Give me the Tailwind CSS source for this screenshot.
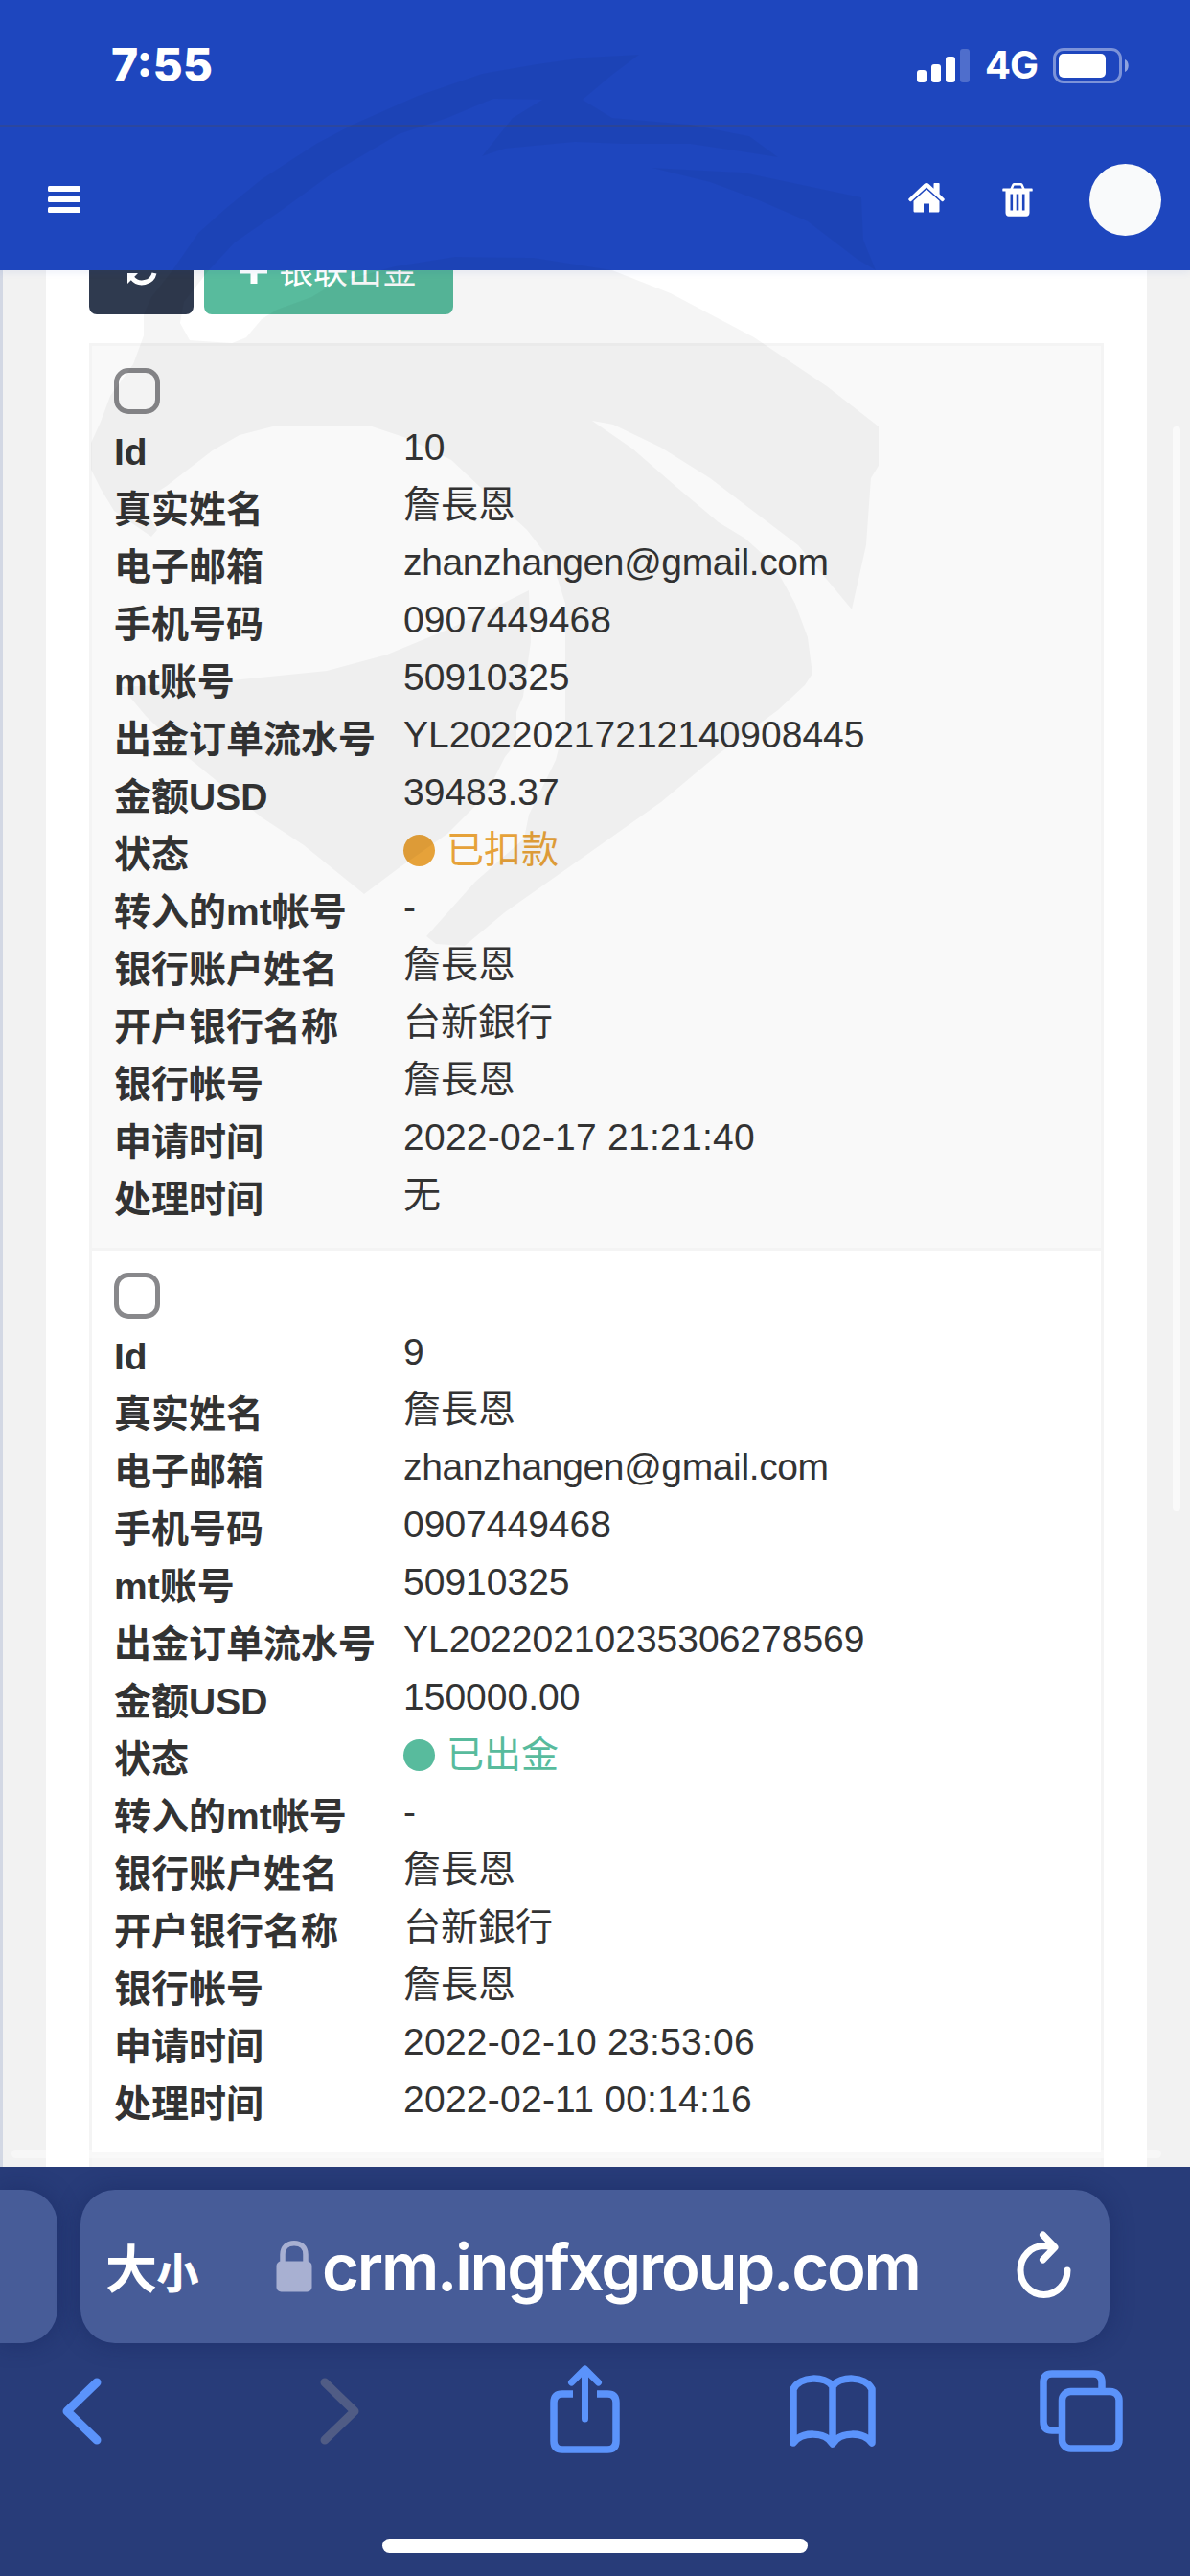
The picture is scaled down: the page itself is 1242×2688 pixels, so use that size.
<!DOCTYPE html>
<html lang="zh-CN">
<head>
  <meta charset="UTF-8" />
  <meta name="viewport" content="width=device-width, initial-scale=1.0"/>
  <title>银联出金</title>
  <script src="https://cdn.jsdelivr.net/npm/@tailwindcss/browser@4"></script>
</head>
<body class="relative flex flex-col w-[1242px] h-[2688px] overflow-hidden bg-[#f2f2f2] text-[#333] font-['Liberation_Sans','Noto_Sans_CJK_SC',sans-serif]">

  <!-- Status bar + navbar -->
  <header class="h-[282px] shrink-0 bg-[#1e46be] text-white z-10 shadow-[0_2px_8px_rgba(30,70,190,0.08)]">
    <div class="h-[130px] pt-1.5 pl-[116px] pr-[63px] flex items-center justify-between font-['Inter',sans-serif]">
      <span class="text-[48px] font-extrabold leading-none">7:55</span>
      <div class="flex items-center">
        <svg class="w-[55px] h-[35px]" viewBox="0 0 55 35" fill="#fff">
          <rect x="0" y="22" width="10" height="13" rx="3"/>
          <rect x="15" y="16" width="10" height="19" rx="3"/>
          <rect x="30" y="8" width="10" height="27" rx="3"/>
          <rect x="45" y="0" width="10" height="35" rx="3" opacity=".22"/>
        </svg>
        <span class="ml-[16px] w-[54px] text-[40px] font-bold leading-none tracking-[-1px]">4G</span>
        <svg class="ml-[17px] w-[80px] h-[37px]" viewBox="0 0 80 37">
          <rect x="1.5" y="1.5" width="69" height="34" rx="9.5" fill="none" stroke="#fff" stroke-width="3" opacity=".42"/>
          <rect x="6" y="6" width="49" height="25" rx="5" fill="#fff"/>
          <path d="M75 12c5 2 5 11 0 13z" fill="#fff" opacity=".5"/>
        </svg>
      </div>
    </div>
    <div class="h-[152px] border-t-[3px] border-[#2c479f] pt-0.5 pl-[50px] pr-[30px] flex items-center">
      <svg class="w-[34px] h-[28px] -mt-0.5" viewBox="0 0 34 28" fill="#fff">
        <rect width="34" height="6" rx="1.5"/>
        <rect y="11" width="34" height="6" rx="1.5"/>
        <rect y="22" width="34" height="6" rx="1.5"/>
      </svg>
      <svg class="ml-auto -mt-1 w-[38px] h-[31px]" viewBox="0 0 38 31" fill="#fff">
        <path d="M19 0c1 0 1.700.4 2.500 1.100L26.500 5.800V.8c0-.5.300-.8.800-.8h4.500c.5 0 .8.300.8.800v10.800l4.900 4.600c.5.500.5 1 .1 1.500l-1.200 1.200c-.5.500-1 .4-1.500 0L19 4.500 3.100 18.900c-.5.400-1 .5-1.500 0L.4 17.700c-.4-.5-.4-1 .1-1.500L16.500 1.100C17.300.4 18 0 19 0z"/>
        <path fill-rule="evenodd" d="M19 6.500l13.500 12.200V29c0 1-.7 1.600-1.600 1.600H7.100c-.9 0-1.600-.6-1.600-1.600V18.700zM16 21.500v9.100h6v-9.100z"/>
      </svg>
      <svg class="ml-[60px] w-[32px] h-[35px]" viewBox="0 0 32 35">
        <path d="M9.500 6.500l1.800-4.300c.3-.7.800-1 1.500-1h6.400c.7 0 1.200.3 1.500 1l1.800 4.300" fill="none" stroke="#fff" stroke-width="2.500"/>
        <path fill="#fff" fill-rule="evenodd" d="M1 5.500h30c.4 0 .7.300.7.700v1.700c0 .4-.3.700-.7.700h-2.500V31c0 2.200-1.400 3.700-3.300 3.700H6.800c-1.900 0-3.300-1.500-3.300-3.700V8.600H1c-.4 0-.7-.3-.7-.7V6.200c0-.4.300-.7.700-.7zM8.500 11.500v17h2.600v-17zM14.700 11.500v17h2.600v-17zM20.900 11.500v17h2.600v-17z"/>
      </svg>
      <span class="ml-[59px] size-[75px] rounded-full bg-[#f9fafb]"></span>
    </div>
  </header>

  <!-- Page content -->
  <main class="relative h-[1979px] shrink-0 overflow-hidden border-l-[3px] border-[#d3d8e4]">
    <div class="ml-[45px] w-[1149px] h-full bg-white px-[45px]">
      <div class="flex gap-[11px]">
        <button class="-mt-[46px] w-[109px] h-[92px] rounded-lg bg-[#2f3a4f] flex items-center justify-center">
          <svg class="w-[34px] h-[32px]" viewBox="0 0 34 32" fill="none" stroke="#fff" stroke-width="5">
            <path d="M4 13A13 12.500 0 0 1 27 8M30 19A13 12.500 0 0 1 7 24"/>
            <path d="M32 2v11H21zM2 30V19h11z" fill="#fff" stroke="none"/>
          </svg>
        </button>
        <button class="-mt-[46px] w-[260px] h-[92px] rounded-lg bg-[#58bb9d] text-white flex items-center pl-[38px]">
          <svg class="w-[28px] h-[28px]" viewBox="0 0 28 28" fill="#fff"><path d="M10.500 0h7v10.500H28v7H17.500V28h-7V17.500H0v-7h10.500z"/></svg>
          <span class="ml-[12px] pt-[3px] text-[36px] leading-none">银联出金</span>
        </button>
      </div>
      <div id="list" class="mt-[30px] w-[1059px] border-x-[3px] border-[#f4f4f4]"></div>
    </div>
    <div class="absolute left-[1221px] top-[163px] w-[8px] h-[1132px] rounded-full bg-[#fafafa]"></div>
    <div class="absolute left-[9px] top-[1961px] w-[1200px] h-[9px] rounded-full bg-white/40"></div>
  </main>

  <!-- Browser toolbar -->
  <footer class="h-[427px] shrink-0 bg-[#283c79] pt-[24px]">
    <div class="flex gap-[24px] text-white">
      <div class="w-[60px] h-[160px] rounded-r-[36px] bg-[#475c98] shadow-[0_0_24px_rgba(20,35,90,0.45)]"></div>
      <div class="w-[1074px] h-[160px] rounded-[36px] bg-[#475c98] shadow-[0_0_24px_rgba(20,35,90,0.45)] flex items-center pl-[26px] pr-[40px]">
        <span class="flex items-baseline font-['Noto_Sans_CJK_SC',sans-serif] font-bold leading-none"><span class="text-[54px]">大</span><span class="text-[43px] [-webkit-text-stroke:1px_#fff]">小</span></span>
        <svg class="ml-[81px] w-[38px] h-[54px]" viewBox="0 0 38 54">
          <path d="M7 26V14.500C7 7 12 2.800 19 2.800S31 7 31 14.500V26" fill="none" stroke="#a8b0d2" stroke-width="5.500"/>
          <rect x="0.500" y="21.500" width="37" height="32" rx="5" fill="#a8b0d2"/>
        </svg>
        <span class="ml-[10px] whitespace-nowrap font-['Inter',sans-serif] font-semibold text-[67px] leading-none tracking-[-2.2px]">crm.ingfxgroup.com</span>
        <svg class="ml-auto -mt-1 w-[57px] h-[70px]" viewBox="0 0 57 70" fill="none" stroke="#fff" stroke-width="7" stroke-linecap="round" stroke-linejoin="round">
          <path d="M53 41A24.500 25.500 0 1 1 28.500 15.500L38 16.500M27.500 4L40 17L27.500 30"/>
        </svg>
      </div>
    </div>
    <div class="mt-[20px] pl-[64px] h-[98px] flex items-center text-[#5b93fb]">
      <svg class="mt-[4px] w-[42px] h-[70px]" viewBox="0 0 42 70" fill="none" stroke="currentColor" stroke-width="9" stroke-linecap="round" stroke-linejoin="round"><path d="M37 5L6 35l31 30"/></svg>
      <svg class="mt-[4px] ml-[228px] w-[42px] h-[70px] text-[#505c85]" viewBox="0 0 42 70" fill="none" stroke="currentColor" stroke-width="9" stroke-linecap="round" stroke-linejoin="round"><path d="M5 5l31 30L5 65"/></svg>
      <svg class="ml-[198px] w-[73px] h-[92px]" viewBox="0 0 73 92" fill="none" stroke="currentColor" stroke-width="7.500" stroke-linecap="round" stroke-linejoin="round">
        <path d="M24 30H13c-6 0-9 3-9 9v40c0 6 3 9 9 9h47c6 0 9-3 9-9V39c0-6-3-9-9-9H49" stroke-linecap="butt"/>
        <path d="M36.500 56V5M22.500 18l14-14 14 14" stroke-width="7"/>
      </svg>
      <svg class="mt-[4px] ml-[177px] w-[90px] h-[76px]" viewBox="0 0 90 76" fill="none" stroke="currentColor" stroke-width="7.500" stroke-linejoin="round">
        <path d="M45 12C37 1 11 1 4 15v56c9-12 33-12 41 1 8-13 32-13 41-1V15C79 1 53 1 45 12zM45 12v60"/>
      </svg>
      <svg class="mt-[4px] ml-[171px] w-[87px] h-[86px]" viewBox="0 0 87 86" fill="none" stroke="currentColor" stroke-width="7.500">
        <path d="M20 63h-7c-6 0-9-3-9-9V13c0-6 3-9 9-9h43c6 0 9 3 9 9v9"/>
        <rect x="23.500" y="22.500" width="59.500" height="59.500" rx="9"/>
      </svg>
    </div>
    <div class="mx-auto mt-[86px] w-[444px] h-[15px] rounded-full bg-white"></div>
  </footer>

  <!-- Watermark laid over the page -->
  <svg class="absolute inset-0 z-20 w-[1242px] h-[1100px] pointer-events-none" viewBox="0 0 1242 1100" fill="#000" fill-opacity=".04">
    <path d="M667 57L610 60L560 67L503 77L436 100L368 130L330 150L273 187L235 218L207 243L180 282L158 310L150 328V350L139 380L115 413L105 440L95 462V490L105 510L119 533L158 560L164 553L152 533L154 520L174 507L222 470L250 454L285 445H388L424 457L471 480L503 510L550 553L577 588L590 630V753L580 793L552 850L547 875L496 920L445 977L455 985L485 987L527 952L608 895L690 837L751 786L812 741L840 715L848 703L843 665L830 630L807 588L778 562L750 545L706 508L660 468L618 439L640 443L690 467L741 499L833 569L889 636L904 569L909 499L917 486V445L863 403L787 352L751 333L700 306L639 282L557 269L475 268L412 278L350 295L325 310L289 323L273 333L257 352L242 358L198 355L188 337L192 315L218 282L245 253L293 220L348 180L416 140L467 123L515 103L566 104L535 123L503 163L527 155L600 148L649 150L720 150L760 156L812 164L782 142L720 130L639 123L608 104L639 78Z"/>
    <path d="M680 175L776 180L899 206L901 250L914 282L894 270L843 231L792 209L741 190Z"/>
    <path d="M127 717L242 710L341 700L404 683L467 657L520 632L552 616L554 670L546 727L539 743V775L527 790L507 830L467 870L416 906L380 933L317 882L273 853L198 792L152 747Z"/>
  </svg>

  <script>
    const rows = [
      {
        'Id': '10',
        '真实姓名': '詹長恩',
        '电子邮箱': 'zhanzhangen@gmail.com',
        '手机号码': '0907449468',
        'mt账号': '50910325',
        '出金订单流水号': 'YL20220217212140908445',
        '金额USD': '39483.37',
        '状态': '已扣款',
        '转入的mt帐号': '-',
        '银行账户姓名': '詹長恩',
        '开户银行名称': '台新銀行',
        '银行帐号': '詹長恩',
        '申请时间': '2022-02-17 21:21:40',
        '处理时间': '无'
      },
      {
        'Id': '9',
        '真实姓名': '詹長恩',
        '电子邮箱': 'zhanzhangen@gmail.com',
        '手机号码': '0907449468',
        'mt账号': '50910325',
        '出金订单流水号': 'YL20220210235306278569',
        '金额USD': '150000.00',
        '状态': '已出金',
        '转入的mt帐号': '-',
        '银行账户姓名': '詹長恩',
        '开户银行名称': '台新銀行',
        '银行帐号': '詹長恩',
        '申请时间': '2022-02-10 23:53:06',
        '处理时间': '2022-02-11 00:14:16'
      }
    ];
    const statusColor = {
      '已扣款': 'text-[#e6a23a]',
      '已出金': 'text-[#58bb9d]'
    };

    let html = '';
    rows.forEach(function(row, i) {
      const bg = i % 2 === 0 ? 'bg-[#f9f9f9]' : 'bg-white';
      html += `<div class="h-[944px] border-t-[3px] border-[#f4f4f4] pt-[23px] pl-[23px] ${bg}">`;
      html += `<div class="size-[48px] mb-[5px] rounded-[15px] border-[5px] border-[#88888b] bg-white/60"></div>`;
      for (const key in row) {
        const value = row[key];
        let cell = value;
        let tracking = '';
        if (value.includes('@')) tracking = 'tracking-[-0.37px]';
        if (value.includes(':')) tracking = 'tracking-[0.25px]';
        if (statusColor[value]) {
          cell = `<span class="flex items-center gap-[12px] ${statusColor[value]}"><span class="size-[33px] rounded-full bg-current"></span>${value}</span>`;
        }
        html += `<div class="grid grid-cols-[302px_1fr] h-[60px] text-[39px] leading-[60px]"><span class="font-bold leading-[70px] whitespace-nowrap">${key}</span><span class="font-normal ${tracking}">${cell}</span></div>`;
      }
      html += `</div>`;
    });
    html += `<div class="h-[20px] border-t-[3px] border-[#f4f4f4] bg-[#f6f6f6]"></div>`;
    document.getElementById('list').innerHTML = html;
  </script>
</body>
</html>
